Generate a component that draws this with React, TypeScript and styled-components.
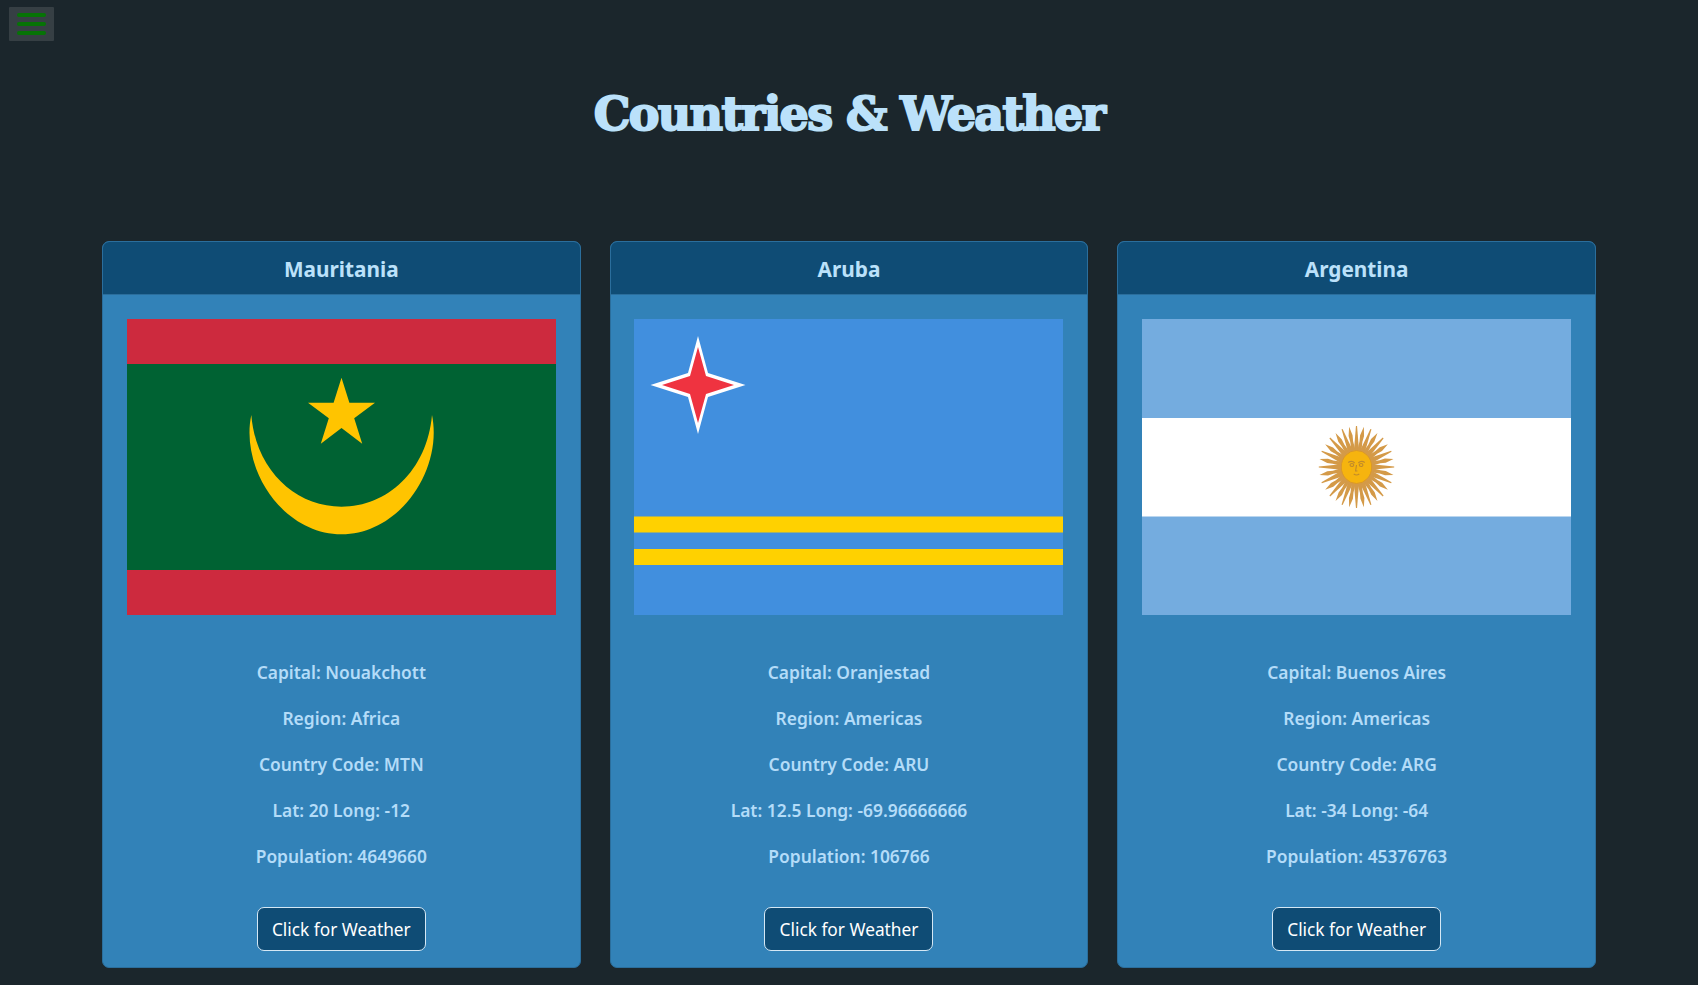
import React from "react";
import styled, { createGlobalStyle } from "styled-components";

interface ICountry {
  name: string;
  capital: string;
  region: string;
  code: string;
  lat: number;
  long: number;
  population: number;
  flag: React.ReactNode;
}

const GlobalStyle = createGlobalStyle`
  * {
    box-sizing: border-box;
  }

  body {
    margin: 0;
    background: #1b262c;
    font-family: "Noto Sans", "Open Sans", sans-serif;
  }
`;

const TopBar = styled.nav`
  padding: 7px 0 0 9px;
`;

const Toggler = styled.button`
  display: flex;
  flex-direction: column;
  justify-content: center;
  align-items: center;
  gap: 5px;
  width: 45px;
  height: 34px;
  padding: 0;
  border: none;
  border-radius: 1px;
  background: #363f44;
`;

const TogglerLine = styled.span`
  width: 29px;
  height: 4px;
  border-radius: 2px;
  background: #067306;
`;

const Title = styled.h1`
  margin: 44px 0 0;
  height: 156px;
  color: #bbe1fa;
  font-family: "DejaVu Serif", serif;
  font-size: 46px;
  font-weight: 700;
  line-height: 58px;
  letter-spacing: -1.6px;
  text-align: center;
  -webkit-text-stroke: 2px #bbe1fa;
`;

const CardGrid = styled.main`
  display: grid;
  grid-template-columns: repeat(3, 1fr);
  gap: 29px;
  padding: 0 102px 18px;
`;

const Card = styled.article`
  display: flex;
  flex-direction: column;
  align-items: center;
  border: 1px solid #2b6e9c;
  border-radius: 7px;
  background: #3282b8;
  overflow: hidden;
`;

const CardHeader = styled.h5`
  width: 100%;
  height: 53px;
  margin: 0;
  border-bottom: 1px solid #2b6e9c;
  background: #0f4c75;
  color: #bbe1fa;
  font-size: 20.8px;
  font-weight: 700;
  line-height: 54px;
  text-align: center;
`;

const FlagFrame = styled.svg`
  display: block;
  width: 429px;
  height: 296px;
  margin: 24px 0 42px;
`;

const Info = styled.p`
  margin: 0 0 16px;
  color: #b4dcf8;
  font-size: 17.4px;
  font-weight: 600;
  line-height: 30px;
  text-align: center;
`;

const WeatherButton = styled.button`
  width: 169px;
  height: 44px;
  margin: 20px 0 16px;
  padding: 0;
  border: 1px solid #d5e8f5;
  border-radius: 7px;
  background: #0f4c75;
  color: #fff;
  font-family: inherit;
  font-size: 17.3px;
  line-height: 27px;
`;

const MauritaniaFlag = () => (
  <FlagFrame viewBox="0 0 429 296">
    <rect width="429" height="296" fill="#cd2a3e" />
    <rect y="45" width="429" height="206" fill="#006233" />
    <path
      d="M124.3 96C113 150 156 215.300 214.500 215.300C273 215.300 316 150 305 96C300 152 260 187.700 214.500 187.700C169 187.700 129 152 124.300 96Z"
      fill="#ffc400"
    />
    <path
      d="M214.5 58.7L222.4 83.7H248L227.2 99.2L235.2 124.7L214.5 109L193.8 124.7L201.8 99.2L181 83.7H206.6Z"
      fill="#ffc400"
    />
  </FlagFrame>
);

const ArubaFlag = () => (
  <FlagFrame viewBox="0 0 429 296">
    <rect width="429" height="296" fill="#418fde" />
    <rect y="197.500" width="429" height="16" fill="#ffd100" />
    <rect y="230" width="429" height="16" fill="#ffd100" />
    <path
      d="M64 17L74 54L111.500 66L74 78L64 115L54 78L16.500 66L54 54Z"
      fill="#fff"
    />
    <path
      d="M64 28L72 57L100 66L72 75L64 104L56 75L28 66L56 57Z"
      fill="#ef3340"
    />
  </FlagFrame>
);

const sunRays = Array.from({ length: 32 }, (_, i) => (i * 360) / 32);

const ArgentinaFlag = () => (
  <FlagFrame viewBox="0 0 429 296">
    <rect width="429" height="296" fill="#74acdf" />
    <rect y="99" width="429" height="98.500" fill="#fff" />
    <g transform="translate(214.5 148) scale(0.92 1)">
      {sunRays.map((angle, i) => (
        <path
          key={angle}
          transform={`rotate(${angle})`}
          d={i % 2 ? "M-2.400 -14L-1.800 -26L-2.400 -32L0 -41L2 -32L1.400 -26L2.400 -14Z" : "M-3 -14L-.6 -41H.6L3 -14Z"}
          fill="#d49a48"
        />
      ))}
      <circle r="16.500" fill="#f6b40e" stroke="#d9962a" strokeWidth="1" />
      <path
        d="M-9 -4.500Q-5 -7 -2 -4M2 -4Q5 -7 9 -4.500M-7 -2a2 1.500 0 1 0 4 0a2 1.500 0 1 0 -4 0M3 -2a2 1.500 0 1 0 4 0a2 1.500 0 1 0 -4 0M0 -2L-1 4H1M-3 7Q0 9 3 7"
        fill="none"
        stroke="#c08a2a"
        strokeWidth="1.200"
      />
    </g>
  </FlagFrame>
);

const countries: ICountry[] = [
  {
    name: "Mauritania",
    capital: "Nouakchott",
    region: "Africa",
    code: "MTN",
    lat: 20,
    long: -12,
    population: 4649660,
    flag: <MauritaniaFlag />,
  },
  {
    name: "Aruba",
    capital: "Oranjestad",
    region: "Americas",
    code: "ARU",
    lat: 12.5,
    long: -69.96666666,
    population: 106766,
    flag: <ArubaFlag />,
  },
  {
    name: "Argentina",
    capital: "Buenos Aires",
    region: "Americas",
    code: "ARG",
    lat: -34,
    long: -64,
    population: 45376763,
    flag: <ArgentinaFlag />,
  },
];

const CountryCard = ({ name, capital, region, code, lat, long, population, flag }: ICountry) => (
  <Card>
    <CardHeader>{name}</CardHeader>
    {flag}
    <Info>Capital: {capital}</Info>
    <Info>Region: {region}</Info>
    <Info>Country Code: {code}</Info>
    <Info>Lat: {lat} Long: {long}</Info>
    <Info>Population: {population}</Info>
    <WeatherButton>Click for Weather</WeatherButton>
  </Card>
);

const App = () => (
  <>
    <GlobalStyle />
    <TopBar>
      <Toggler aria-label="Menu">
        <TogglerLine />
        <TogglerLine />
        <TogglerLine />
      </Toggler>
    </TopBar>
    <Title>Countries &amp; Weather</Title>
    <CardGrid>
      {countries.map((country) => (
        <CountryCard key={country.code} {...country} />
      ))}
    </CardGrid>
  </>
);

export default App;
